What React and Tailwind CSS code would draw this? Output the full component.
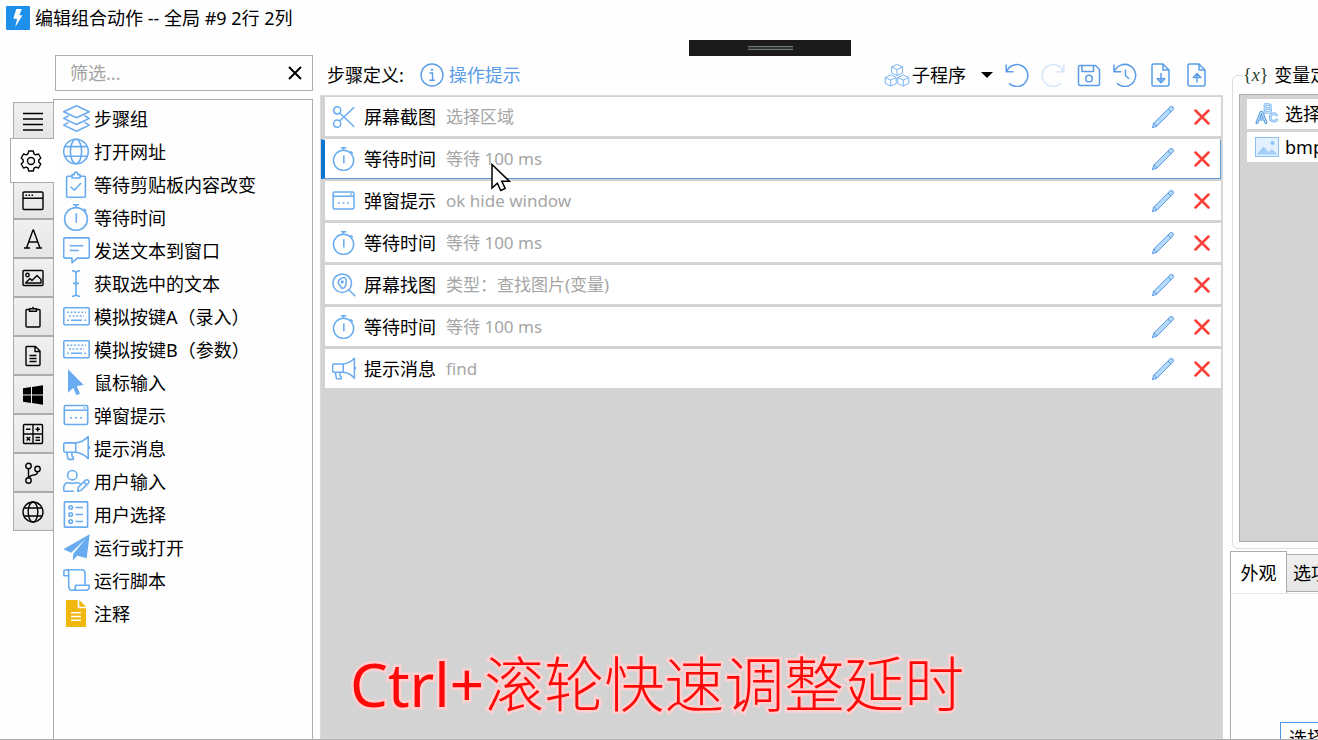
import React from "react";

const icons = {
  layers: (
    <path d="M13.5.8 26.3 6.7 13.5 12.8.7 6.7ZM5.5 10.7.7 13.4 13.5 19.5 26.3 13.4 21.5 10.7M5.5 17.4.7 20.1 13.5 26.2 26.3 20.1 21.5 17.4" />
  ),
  globe: (
    <>
      <circle cx="13" cy="13.5" r="12.3" />
      <ellipse cx="13" cy="13.5" rx="5.6" ry="12.3" />
      <path d="M2 8.6h22M2 18.2h22" />
    </>
  ),
  clipCheck: (
    <>
      <path d="M8.5 5.3H4.6Q3.6 5.3 3.6 6.3v19q0 1 1 1h16.8q1 0 1-1v-19q0-1-1-1h-3.9M9 7V3.6h2.2Q11.4 1 13 1t1.8 2.6H17V7Z" />
      <path d="m7.7 15.7 3.6 3.6L18 12" />
    </>
  ),
  timer: (
    <>
      <circle cx="13" cy="15" r="11.4" />
      <path d="M10 .8h6M13 .8v2.8M13.3 9.3v9.4M20.8 4.8l2.6 2.6" />
    </>
  ),
  message: (
    <path d="M2.2.9h22.6q1.5 0 1.5 1.5v17.2q0 1.5-1.5 1.5H14.5L9 25.7v-4.6H2.2Q.7 21.1.7 19.6V2.4Q.7.9 2.2.9ZM6.7 8.7h13.6M6.7 13.5h9" />
  ),
  textCursor: (
    <path d="M9 .7q4 0 4 2.8v20q0 2.8-4 2.8M17.2.7q-4.2 0-4.2 2.8v20q0 2.8 4.2 2.8M10 13.4h6" />
  ),
  keyboard: (
    <>
      <rect x=".8" y="4.7" width="25.4" height="17" rx="1" />
      <path d="M4 9.2h19M6 13h15" strokeDasharray="1.8 1.8" />
      <path d="M4 17.2h1.8M8 17.2h11M21.4 17.2h1.8" />
    </>
  ),
  pointer: (
    <path d="M5 .3 20.7 16l-7 1 3.3 7.7-3.7 1.5-3-7.5-5.3 5Z" fill="currentColor" stroke="none" />
  ),
  window: (
    <>
      <rect x="1.3" y="3.5" width="23.4" height="19" rx="1.5" />
      <path d="M1.3 8.2h23.4M20.5 6h1.8M7 15.7h2M12 15.7h2M17 15.7h2" />
    </>
  ),
  horn: (
    <>
      <path d="M2.6 7.9h10.1v9.3H2.6Q.7 17.2.7 15.3V9.8Q.7 7.9 2.6 7.9ZM12.7 7.9Q20 7.2 25.2 1.5v22.3Q20 17.9 12.7 17.2M3.9 17.4l.9 6.2q.2.8 1 .8h4.6v-2l-1.3-1.2q-.5-2 0-3.8" />
      <path d="M26.3 11v3" />
    </>
  ),
  userEdit: (
    <>
      <circle cx="9.3" cy="7.2" r="4.7" />
      <path d="M17.8 16.2Q15.8 14.2 12 14.9q-2.700.9-5.400 0Q.7 14 .7 20.500v1.500q0 1.300 1.500 1.300h8.600" />
      <path d="m14.600 23.300.700-4 7-7q1.700-1.200 3 0t0 2.900l-7 7ZM20.800 13.800l2.900 2.900" />
    </>
  ),
  listBox: (
    <>
      <rect x="1.4" y=".9" width="23.2" height="25.2" rx=".6" />
      <circle cx="7.7" cy="6.500" r="1.800" />
      <circle cx="7.7" cy="13.500" r="1.800" />
      <circle cx="7.7" cy="20.500" r="1.800" />
      <path d="M12.500 6.500H20M12.500 13.500H20M12.500 20.500H20" />
    </>
  ),
  plane: (
    <path d="M26.700.3.3 15.300 8.300 18.700 23.300 4 10.300 19.800 9.700 26.500 14.300 21.700 23.700 24.300Z" fill="currentColor" stroke="none" />
  ),
  script: (
    <path d="M5.700 8.700H.9V4.300Q.9 2.700 3.300 2.700T5.700 5v14q0 4.300 3.500 4.300h14q3-.2 3-3.800v-1.300H12.500v2q0 3.100-3 3.100M3.300 2.700h15.400q3.300 0 3.300 3.300v12" />
  ),
  note: (
    <>
      <path d="M3 0h11.700v8.300H23V27H3ZM16.300 0 23 6.700h-6.700Z" fill="currentColor" stroke="none" />
      <path d="M8 12.800h10M8 16.500h10M8 20.200h10" stroke="#fff" />
    </>
  ),
  scissors: (
    <>
      <circle cx="5.800" cy="6" r="4" />
      <circle cx="5.800" cy="21" r="4" />
      <path d="M8.600 9 25 24.500M8.600 18 25 2.500" />
    </>
  ),
  findImage: (
    <>
      <circle cx="11.500" cy="11.500" r="10.500" />
      <path d="m19.200 19.200 7 7M11.500 17.300Q7 12.300 7 10t4.500-4.500T16 10t-4.500 7.300Z" />
      <circle cx="11.500" cy="10" r=".9" />
    </>
  ),
};

function Icon({ name, className = "size-[27px]", width = 1.6 }) {
  return (
    <svg viewBox="0 0 27 27" className={`shrink-0 ${className}`} fill="none" stroke="currentColor" strokeWidth={width} strokeLinejoin="round" aria-hidden="true">
      {icons[name]}
    </svg>
  );
}

const railIcons = [
  { label: "全部", draw: <path d="M1 3.500h20M1 9h20M1 14.500h20M1 20h20" /> },
  {
    label: "基础",
    draw: (
      <>
        <path d="M8.700 1.800h4.600l.7 2.800 1.700 1 2.800-.8 2.300 4-2 2v2l2 2-2.300 4-2.800-.8-1.700 1-.7 2.800H8.700L8 19l-1.700-1-2.800.8-2.300-4 2-2v-2l-2-2 2.300-4 2.800.8 1.700-1Z" transform="translate(0 -.8)" />
        <circle cx="11" cy="11" r="3.500" />
      </>
    ),
  },
  {
    label: "窗口",
    draw: (
      <>
        <rect x="1" y="2" width="20" height="17.500" rx="1" />
        <path d="M1 8.200h20M3.500 5.200h1.500M6.500 5.200H8M9.500 5.200H11" />
      </>
    ),
  },
  { label: "文本", draw: <path d="M2 20h6M14 20h6M4.500 20 11 2h.5L18 20M6.700 14h9" /> },
  {
    label: "图片",
    draw: (
      <>
        <rect x="1" y="3.500" width="20" height="15" rx="1" />
        <circle cx="5.500" cy="8" r="1.700" />
        <path d="M3.500 16 8 11.500l2 2L15 8.500l4 4V16Z" />
      </>
    ),
  },
  { label: "剪贴板", draw: <path d="M7.500 3.500H5q-1 0-1 1V20q0 1 1 1h12q1 0 1-1V4.500q0-1-1-1h-2.500M7.500 2.800h7v2.400h-7ZM11 .8v2" /> },
  { label: "文件", draw: <path d="M5 1.500h8.500L18 6v13.500q0 1-1 1H5q-1 0-1-1v-17q0-1 1-1ZM13 1.500V6.500h5M7.500 10.500h7M7.500 13.500h7M7.500 16.500h7" /> },
  {
    label: "系统",
    draw: <path d="M1 4.200 9 3v7.500H1ZM10 2.900 21 1.300v9.200H10ZM1 11.500h8V19l-8-1.200ZM10 11.500h11v9.200L10 19.100Z" fill="currentColor" stroke="none" />,
  },
  {
    label: "运算",
    draw: (
      <>
        <rect x="1.500" y="1.500" width="19" height="19" rx="1" />
        <path d="M11 1.500v19M1.500 11h19M4 6.300h4.500M13.500 6.300H18M15.700 4v4.600M4.600 14l3.600 3.600M8.200 14l-3.600 3.600M13.500 14.500H18M13.500 17.200H18" />
      </>
    ),
  },
  {
    label: "流程",
    draw: (
      <>
        <circle cx="6.500" cy="4" r="2.700" />
        <circle cx="6.500" cy="18.500" r="2.700" />
        <circle cx="15.500" cy="7" r="2.700" />
        <path d="M6.500 6.700v9M15.500 9.700q0 2.800-3.500 3.300-4.500.6-5.500 3" />
      </>
    ),
  },
  {
    label: "网络",
    draw: (
      <>
        <circle cx="11" cy="11" r="10" />
        <ellipse cx="11" cy="11" rx="4.800" ry="10" />
        <path d="M2 7h18M2 15h18" />
      </>
    ),
  },
];

const modules = [
  ["layers", "步骤组"],
  ["globe", "打开网址"],
  ["clipCheck", "等待剪贴板内容改变"],
  ["timer", "等待时间"],
  ["message", "发送文本到窗口"],
  ["textCursor", "获取选中的文本"],
  ["keyboard", "模拟按键A（录入）"],
  ["keyboard", "模拟按键B（参数）"],
  ["pointer", "鼠标输入"],
  ["window", "弹窗提示"],
  ["horn", "提示消息"],
  ["userEdit", "用户输入"],
  ["listBox", "用户选择"],
  ["plane", "运行或打开"],
  ["script", "运行脚本"],
  ["note", "注释"],
];

const steps = [
  ["scissors", "屏幕截图", "选择区域"],
  ["timer", "等待时间", "等待 100 ms"],
  ["window", "弹窗提示", "ok hide window"],
  ["timer", "等待时间", "等待 100 ms"],
  ["findImage", "屏幕找图", "类型：查找图片(变量)"],
  ["timer", "等待时间", "等待 100 ms"],
  ["horn", "提示消息", "find"],
];

const tools = [
  { label: "撤销", draw: <path d="M1.200 1.500v7.300h7.300M1.600 8.500A11 11 0 1 1 4 20.300" /> },
  { label: "重做", disabled: true, draw: <path d="M22.800 1.500v7.300h-7.300M22.400 8.500A11 11 0 1 0 20 20.300" /> },
  {
    label: "保存",
    draw: (
      <>
        <path d="M3 2.500h15.500l4 4V21q0 1.500-1.500 1.500H3Q1.500 22.500 1.500 21V4Q1.500 2.500 3 2.500ZM5 2.500v6h11.500v-6" />
        <circle cx="12" cy="15.500" r="3.300" />
      </>
    ),
  },
  { label: "历史", draw: <path d="M1 1.500v7.300h7.300M1.400 8.500A11 11 0 1 1 4 20.300M12.500 6.500v6l3.500 3.300" /> },
  { label: "导入", draw: <path d="M4.500 1h9.500l6 6v14.500q0 1.500-1.500 1.500h-14Q3 23 3 21.500v-19Q3 1 4.500 1ZM14 1v6h6M12 10v9.500M8.200 15.800h7.600L12 19.800Z" /> },
  { label: "导出", draw: <path d="M4.500 1h9.500l6 6v14.500q0 1.500-1.500 1.500h-14Q3 23 3 21.500v-19Q3 1 4.500 1ZM14 1v6h6M12 19.500V10M8.200 14.500h7.600L12 10.500Z" /> },
];

function CubesIcon() {
  return (
    <svg viewBox="0 0 26 24" className="h-6 w-[26px]" fill="none" stroke="#7ab4f5" strokeWidth="1" strokeLinejoin="round" aria-hidden="true">
      {["translate(7 1)", "translate(.7 11.500)", "translate(13.300 11.500)"].map((t) => (
        <path key={t} transform={t} d="M6 .5 11.500 3v6L6 11.500.5 9V3ZM.5 3 6 5.500 11.500 3M6 5.500v6" />
      ))}
    </svg>
  );
}

function PencilIcon() {
  return (
    <svg viewBox="0 0 24 24" className="size-6" fill="#b5d8fb" stroke="#5a9de2" strokeWidth="1" strokeLinejoin="round" aria-hidden="true">
      <path d="m1.300 22.700 1.500-4.700L19 1.900q1.300-1.100 2.700 0t.3 2.900L6 21.200ZM17 4l3.100 3.100M2.800 18 6 21.200" />
    </svg>
  );
}

function Rail() {
  return (
    <nav aria-label="模块分类" className="flex w-[43px] shrink-0 flex-col items-end pt-[3px]">
      {railIcons.map(({ label, draw }, i) => (
        <button
          key={label}
          type="button"
          aria-label={label}
          className={
            i === 1
              ? "z-10 -mr-px flex h-[45px] w-[44px] shrink-0 items-center justify-center border border-r-0 border-[#acacac] bg-white pr-[3px]"
              : i === 0
                ? "flex h-[36px] w-[40px] shrink-0 items-center justify-center border border-r-0 border-b-0 border-[#acacac] bg-linear-to-b from-[#f0f0f0] to-[#e5e5e5] pr-[2px]"
                : i === 2
                  ? "flex h-[36px] w-[40px] shrink-0 items-center justify-center border border-t-0 border-r-0 border-[#acacac] bg-linear-to-b from-[#f0f0f0] to-[#e5e5e5] pr-[2px]"
                  : "flex h-[39px] w-[40px] shrink-0 items-center justify-center border border-r-0 border-[#acacac] bg-linear-to-b from-[#f0f0f0] to-[#e5e5e5] pr-[2px]"
          }
        >
          <svg viewBox="0 0 22 22" className="size-[22px]" fill="none" stroke="currentColor" strokeWidth="1.400" strokeLinejoin="round" aria-hidden="true">
            {draw}
          </svg>
        </button>
      ))}
    </nav>
  );
}

function ModulePanel() {
  return (
    <aside className="flex w-[313px] shrink-0 flex-col pl-[10px]">
      <div className="mb-2 ml-[45px] flex h-9 shrink-0 items-center border border-[#acacac] pr-[5px] pl-[14px] text-lg">
        <input aria-label="筛选" placeholder="筛选..." className="min-w-0 flex-1 outline-none placeholder:text-[#a3a3a3]" />
        <button type="button" aria-label="清除" className="p-1">
          <svg viewBox="0 0 16 16" className="size-4" stroke="#000" strokeWidth="2" aria-hidden="true">
            <path d="m2 2 12 12M14 2 2 14" />
          </svg>
        </button>
      </div>
      <div className="flex min-h-0 flex-1">
        <Rail />
        <ul className="min-w-0 flex-1 border border-b-0 border-[#acacac] px-[9px] pt-[2px]">
          {modules.map(([icon, text]) => (
            <li key={text} className="flex h-[33px] items-center gap-1 whitespace-nowrap">
              <Icon name={icon} className={icon === "note" ? "size-[27px] text-[#f2b70f]" : "size-[27px] text-[#68abf0]"} />
              {text}
            </li>
          ))}
        </ul>
      </div>
    </aside>
  );
}

function StepPanel() {
  return (
    <main className="flex min-w-0 flex-1 flex-col">
      <header className="flex h-10 shrink-0 items-center pr-2 pl-[7px]">
        <span className="whitespace-nowrap">步骤定义:</span>
        <a href="#tips" className="ml-4 flex items-center gap-[5px] whitespace-nowrap text-[#5a9ce8]">
          <svg viewBox="0 0 24 24" className="size-6" fill="none" stroke="currentColor" strokeWidth="1.400" aria-hidden="true">
            <circle cx="12" cy="12" r="11" />
            <path d="M9.500 10h3v7M9.300 17.300h5.600" />
            <path d="M11 6.700h2" strokeWidth="2" />
          </svg>
          操作提示
        </a>
        <button type="button" className="mr-[6px] ml-auto flex items-center gap-[2px] whitespace-nowrap">
          <CubesIcon />
          子程序
          <svg viewBox="0 0 12 6" className="ml-[13px] h-[6px] w-3" aria-hidden="true">
            <path d="M0 0h12L6 6Z" />
          </svg>
        </button>
        {tools.map(({ label, draw, disabled }) => (
          <button
            key={label}
            type="button"
            aria-label={label}
            disabled={disabled}
            className="flex h-9 w-9 items-center justify-center text-[#5a9ce8] disabled:text-[#d3e6fa]"
          >
            <svg viewBox="0 0 24 24" className="size-6" fill="none" stroke="currentColor" strokeWidth="1.500" strokeLinejoin="round" aria-hidden="true">
              {draw}
            </svg>
          </button>
        ))}
      </header>
      <ul className="flex min-h-0 flex-1 flex-col gap-[3px] border border-[#dadada] bg-[#d3d3d3] pt-px pr-px">
        {steps.map(([icon, title, note], i) => (
          <li
            key={i}
            className={
              i === 1
                ? "-mb-px flex h-[40px] items-center border-y border-r border-l-4 border-t-white border-r-[#5c9bd5] border-b-[#5c9bd5] border-l-[#0b74d1] bg-white pr-[7px] pl-[7px]"
                : "ml-1 flex h-[39px] items-center bg-white pr-2 pl-[7px]"
            }
          >
            <Icon name={icon} className="size-6 text-[#68abf0]" width={1.7} />
            <span className="ml-2 whitespace-nowrap">{title}</span>
            <span className="ml-[10px] flex-1 truncate text-[17px] text-[#a6a6a6]">{note}</span>
            <button type="button" aria-label={`编辑 ${title}`} className="mr-[19px]">
              <PencilIcon />
            </button>
            <button type="button" aria-label={`删除 ${title}`} className="mr-[3px]">
              <svg viewBox="0 0 16 16" className="size-4" stroke="#fb4038" strokeWidth="2.500" strokeLinecap="round" aria-hidden="true">
                <path d="m1.500 1.500 13 13M14.500 1.500l-13 13" />
              </svg>
            </button>
          </li>
        ))}
      </ul>
    </main>
  );
}

function VariablePanel() {
  return (
    <aside className="flex w-[88px] shrink-0 flex-col overflow-hidden whitespace-nowrap">
      <fieldset className="mt-[6px] ml-[2px] w-[400px] shrink-0 rounded-md border border-[#d5dfe5] px-[6px] pb-[6px]">
        <legend className="ml-1 flex items-center gap-[6px]">
          <span className="font-['Liberation_Serif',serif] text-[#24402c]">
            &#123;<i>x</i>&#125;
          </span>
          变量定义
        </legend>
        <div className="mt-[5px] flex h-[448px] flex-col gap-[3px] border border-[#acacac] bg-[#d3d3d3] pt-1 pl-[7px]">
          <div className="flex h-[30px] items-center gap-[6px] bg-white pl-2">
            <svg viewBox="0 0 24 22" className="h-[22px] w-6" fill="none" aria-hidden="true">
              <g strokeLinejoin="round" strokeLinecap="round" stroke="#4d96dd" strokeWidth="3">
                <path d="m2 19.500 4-10h1l4 10M4 16h5" />
              </g>
              <g strokeLinejoin="round" strokeLinecap="round" stroke="#74b2ee" strokeWidth="2.600">
                <path d="M10 9.500v-8h3q2.500 0 2.500 2t-2.500 2h-3M13 5.500q3 0 3 2t-3 2h-3" />
                <path d="M21.500 12q-1.500-1.800-3.500-1.200-3 1-2.800 4 .3 3.200 3.300 3.400 2 0 3.200-1.400" />
              </g>
              <g strokeLinejoin="round" strokeLinecap="round" stroke="#c9e2fb" strokeWidth="1.100">
                <path d="m2 19.500 4-10h1l4 10M4 16h5M10 9.500v-8h3q2.500 0 2.500 2t-2.500 2h-3M13 5.500q3 0 3 2t-3 2h-3M21.500 12q-1.500-1.800-3.500-1.200-3 1-2.800 4 .3 3.200 3.300 3.400 2 0 3.200-1.400" />
              </g>
            </svg>
            选择区域
          </div>
          <div className="flex h-[30px] items-center gap-[6px] bg-white pl-2">
            <svg viewBox="0 0 24 20" className="h-5 w-6" aria-hidden="true">
              <rect x=".5" y=".5" width="23" height="19" fill="#e3f1fe" stroke="#8cc0f4" />
              <path d="m1.500 17.500 7-8 5 5.500 3.500-3 5.500 5.500Z" fill="#a3cffa" />
              <circle cx="17.500" cy="6" r="2" fill="#8cc3f8" />
            </svg>
            bmp
          </div>
        </div>
      </fieldset>
      <div className="mt-[2px] flex w-[400px] items-start" role="tablist">
        <button type="button" role="tab" aria-selected="true" className="h-[42px] w-[57px] shrink-0 border border-b-0 border-[#acacac] bg-white">
          外观
        </button>
        <button type="button" role="tab" aria-selected="false" className="mt-[3px] h-[38px] shrink-0 border border-l-0 border-[#acacac] bg-linear-to-b from-[#f0f0f0] to-[#e5e5e5] px-[6px]">
          选项
        </button>
      </div>
      <div className="min-h-0 w-[400px] flex-1 border-t border-l border-t-[#e6e6e6] border-l-[#acacac] pt-[128px] pl-[49px]">
        <button type="button" className="border border-[#4a94e6] bg-white px-2 py-px">
          选择图标
        </button>
      </div>
    </aside>
  );
}

export default function App() {
  return (
    <div className="relative flex h-screen flex-col overflow-hidden border-b border-[#acacac] bg-[#fefefe] font-['Noto_Sans','Noto_Sans_CJK_SC',sans-serif] text-lg leading-7 font-normal text-black">
      <div className="flex h-[35px] shrink-0 items-center gap-[5px] pl-[6px]">
        <svg viewBox="0 0 24 24" className="size-6" aria-hidden="true">
          <rect width="24" height="24" rx="1" fill="#1e90ec" />
          <path d="M10.200 3h5.600L13.300 9.300h3.200L9.300 21l1.800-8.300H7.300Z" fill="#fff" />
        </svg>
        <h1>编辑组合动作 -- 全局 #9 2行 2列</h1>
      </div>
      <div className="flex min-h-0 flex-1 gap-[7px] pt-5">
        <ModulePanel />
        <StepPanel />
        <VariablePanel />
      </div>

      <div className="absolute top-10 left-[689px] flex h-4 w-[162px] items-center justify-center bg-[#1a1a1a]">
        <div className="h-1 w-[45px] border-y border-[#777] bg-[#2b3a30]" />
      </div>
      <svg viewBox="0 0 20 29" className="absolute top-[163px] left-[491px] h-[29px] w-5" fill="#fff" stroke="#000" strokeWidth="1.500" aria-hidden="true">
        <path d="M1 1.500V25l5.300-4.800 3.500 7.300 4.400-2-3.400-7.300h7.500Z" />
      </svg>
      <p className="absolute top-[644px] left-[350px] text-[60px] leading-[80px] font-light whitespace-nowrap text-[#ff0808] [paint-order:stroke_fill] [-webkit-text-stroke:5px_#ffd0d0]">
        <span className="font-normal">Ctrl+</span>滚轮快速调整延时
      </p>
    </div>
  );
}
